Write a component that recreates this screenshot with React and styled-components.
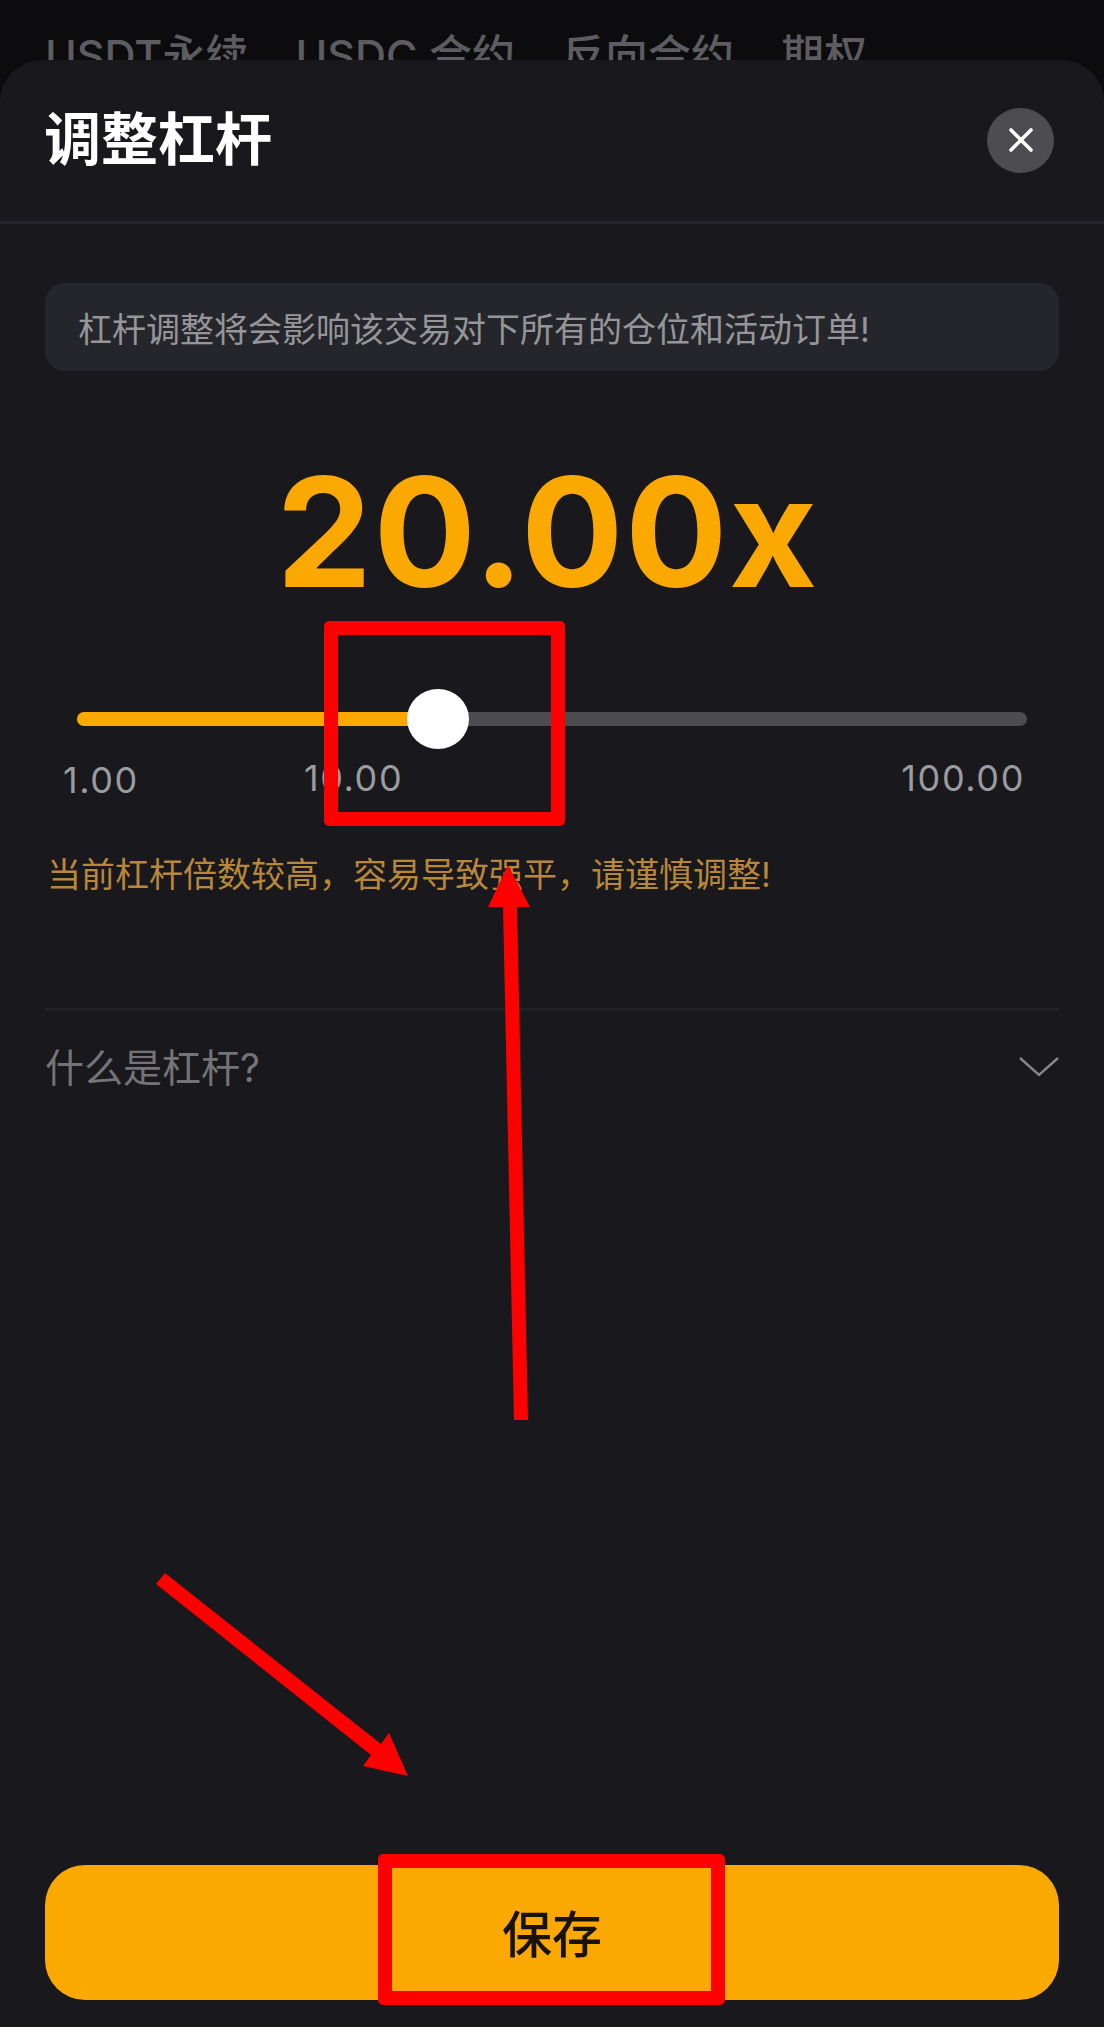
import React from "react";
import styled, { createGlobalStyle } from "styled-components";

const Global = createGlobalStyle`
  html, body { margin: 0; padding: 0; background: #0c0c0e; }
  * { box-sizing: border-box; }
`;

const CJK = `Inter, "Noto Sans CJK SC", sans-serif`;

const Screen = styled.div`
  position: relative;
  width: 1104px;
  height: 2027px;
  overflow: hidden;
  display: flex;
  flex-direction: column;
  background: #0c0c0e;
  font-family: ${CJK};
`;

const TabStrip = styled.div`
  height: 60px;
  flex: none;
  overflow: hidden;
  display: flex;
  gap: 47px;
  padding: 30px 0 0 45px;
`;

const Tab = styled.span`
  font-size: 43px;
  line-height: 50px;
  font-weight: 500;
  color: #5c5c61;
  white-space: nowrap;
`;

const Sheet = styled.section`
  flex: 1;
  display: flex;
  flex-direction: column;
  background: #18181d;
  border-radius: 42px 42px 0 0;
`;

const Header = styled.header`
  height: 164px;
  flex: none;
  display: flex;
  align-items: center;
  justify-content: space-between;
  padding: 0 50px 1px 44px;
  border-bottom: 3px solid #26262c;
`;

const Title = styled.h1`
  margin: 0;
  font-size: 57px;
  line-height: 64px;
  font-weight: 700;
  color: #ffffff;
`;

const CloseButton = styled.button`
  width: 67px;
  height: 65px;
  padding: 0;
  border: 0;
  border-radius: 50%;
  background: #4d4d51;
  display: flex;
  align-items: center;
  justify-content: center;
`;

const Body = styled.div`
  flex: 1;
  display: flex;
  flex-direction: column;
  padding: 59px 45px 27px 45px;
`;

const Notice = styled.p`
  margin: 0;
  height: 88px;
  display: flex;
  align-items: center;
  padding: 0 33px;
  border-radius: 20px;
  background: #25262b;
  font-size: 34px;
  color: #96969a;
`;

const Value = styled.div`
  margin-top: 86px;
  height: 150px;
  display: flex;
  align-items: center;
  justify-content: center;
  font-size: 152px;
  line-height: 150px;
  font-weight: 700;
  letter-spacing: 1.5px;
  color: #fba800;
  padding-right: 9px;
`;

const Slider = styled.div`
  position: relative;
  margin: 105px 32px 0 32px;
  height: 14px;
  border-radius: 7px;
  background: #4b4b50;
`;

const SliderFill = styled.div`
  height: 100%;
  width: ${(p) => p.$percent}%;
  border-radius: 7px 0 0 7px;
  background: #fba800;
`;

const Thumb = styled.div`
  position: absolute;
  top: -23px;
  left: ${(p) => p.$percent}%;
  width: 62px;
  height: 60px;
  margin-left: -31px;
  border-radius: 50%;
  background: #ffffff;
`;

const Marks = styled.div`
  display: flex;
  margin-top: 30px;
  padding: 0 34px 0 18px;
  font-size: 36px;
  line-height: 44px;
  letter-spacing: 1.6px;
  color: #9b9ba0;
`;

const Mark = styled.span`
  margin-left: ${(p) => p.$gap || "0"};
  margin-top: ${(p) => p.$drop || "0"};
`;

const Warning = styled.p`
  margin: 49px 0 0 2px;
  font-size: 34px;
  line-height: 48px;
  color: #b9873a;
`;

const FaqRow = styled.div`
  margin-top: 109px;
  height: 110px;
  display: flex;
  align-items: center;
  justify-content: space-between;
  border-top: 3px solid #212126;
  font-size: 39px;
  color: #747478;
`;

const Chevron = styled.svg`
  margin-top: 5px;
`;

const SaveButton = styled.button`
  margin-top: auto;
  height: 135px;
  padding: 0 0 4px;
  border: 0;
  border-radius: 40px;
  background: #fba800;
  color: #17120a;
  font-family: ${CJK};
  font-size: 50px;
  font-weight: 500;
`;

const Annotations = styled.svg`
  position: absolute;
  top: 0;
  left: 0;
  pointer-events: none;
`;

const Highlight = styled.div`
  position: absolute;
  left: ${(p) => p.$x}px;
  top: ${(p) => p.$y}px;
  width: ${(p) => p.$w}px;
  height: ${(p) => p.$h}px;
  border: 14px solid #ff0000;
  border-radius: 5px;
  pointer-events: none;
`;

export default function App() {
  return (
    <Screen>
      <Global />
      <TabStrip>
        <Tab>USDT永续</Tab>
        <Tab>USDC 合约</Tab>
        <Tab>反向合约</Tab>
        <Tab>期权</Tab>
      </TabStrip>
      <Sheet>
        <Header>
          <Title>调整杠杆</Title>
          <CloseButton aria-label="关闭">
            <svg width="30" height="30" viewBox="0 0 30 30">
              <path d="M5 5 25 25M25 5 5 25" stroke="#fff" strokeWidth="3.6" strokeLinecap="round" fill="none" />
            </svg>
          </CloseButton>
        </Header>
        <Body>
          <Notice>杠杆调整将会影响该交易对下所有的仓位和活动订单!</Notice>
          <Value>20.00x</Value>
          <Slider>
            <SliderFill $percent={38} />
            <Thumb $percent={38} />
          </Slider>
          <Marks>
            <Mark $drop="2px">1.00</Mark>
            <Mark $gap="165px">10.00</Mark>
            <Mark $gap="auto">100.00</Mark>
          </Marks>
          <Warning>当前杠杆倍数较高，容易导致强平，请谨慎调整!</Warning>
          <FaqRow>
            <span>什么是杠杆?</span>
            <Chevron width="40" height="20" viewBox="0 0 40 20">
              <path d="M1 1 20 18 39 1" stroke="#86868a" strokeWidth="2.4" fill="none" />
            </Chevron>
          </FaqRow>
          <SaveButton>保存</SaveButton>
        </Body>
      </Sheet>
      <Highlight $x={324} $y={621} $w={241} $h={205} />
      <Highlight $x={378} $y={1854} $w={347} $h={151} />
      <Annotations width="1104" height="2027" viewBox="0 0 1104 2027">
        <polygon fill="#ff0000" points="514,1420 528,1420 517,907 530,907 508,865 488,907 503,907" />
        <polygon fill="#ff0000" points="165,1573 381,1744 389,1733 408,1776 363,1766 371,1755 156,1584" />
      </Annotations>
    </Screen>
  );
}
